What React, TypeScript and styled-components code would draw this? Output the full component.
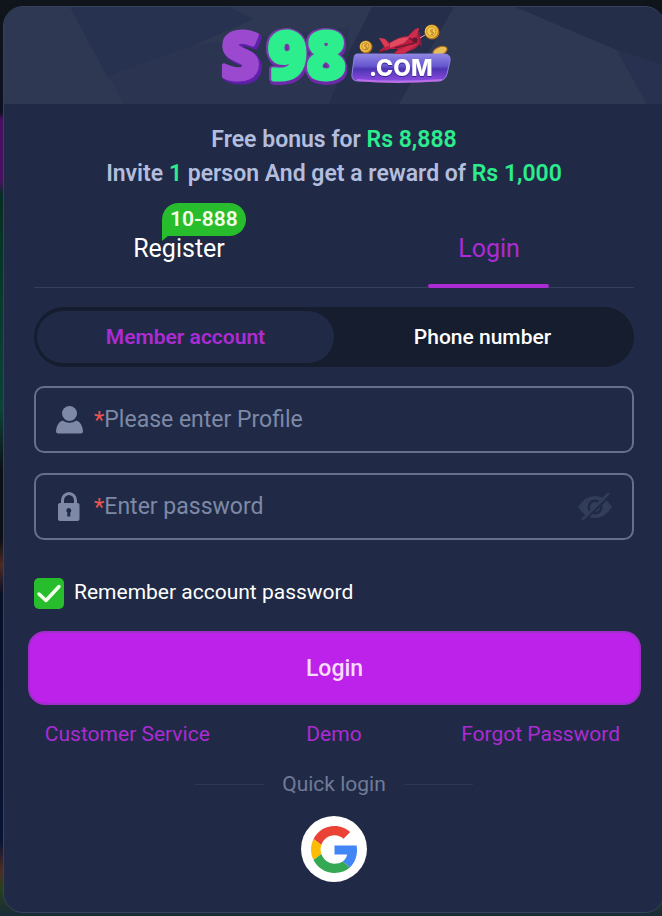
import React, { useState } from "react";
import styled, { createGlobalStyle } from "styled-components";

const colors = {
  card: "#202a46",
  banner: "#2e3853",
  dark: "#151d2f",
  line: "#343f5c",
  border: "#66708d",
  muted: "#7d89a6",
  text: "#b3bede",
  primary: "#ac2bd3",
  button: "#bd22ea",
  green: "#28bd2c",
  mint: "#2cec8d",
  error: "#ed5351",
};

const GlobalStyle = createGlobalStyle`
  * {
    box-sizing: border-box;
  }

  body {
    margin: 0;
    font-family: Roboto, "Liberation Sans", sans-serif;
    color: #fff;
    background: #0f1420;
    overflow-x: hidden;
  }

  button, input {
    font: inherit;
    color: inherit;
  }

  button {
    padding: 0;
    border: 0;
    background: none;
    cursor: pointer;
  }

  p {
    margin: 0;
  }
`;

const Page = styled.div`
  padding: 6px 0 3px 3px;
  overflow: hidden;
  background: linear-gradient(
    #10151b 0,
    #0d1020 112px,
    #4a1060 120px,
    #4a1060 180px,
    #062f24 195px,
    #0d4236 410px,
    #0b1018 470px,
    #0b1018 540px,
    #4d2a24 565px,
    #071027 595px,
    #081435 840px,
    #4b2d27 870px,
    #26401f 890px,
    #182b38 100%
  );
`;

const Card = styled.main`
  margin-right: -3px;
  border: 1px solid #36415e;
  border-radius: 20px;
  background: ${colors.card};
  overflow: hidden;
`;

const Banner = styled.header`
  display: grid;
  justify-items: center;
  height: 97px;
  background: ${colors.banner};

  > * {
    grid-area: 1 / 1;
  }
`;

const Facets = styled.svg`
  width: 100%;
  height: 97px;
`;

const LogoImage = styled.svg`
  width: 240px;
  height: 97px;
`;

const LogoLetters = styled.g`
  font-family: "Open Sans", sans-serif;
  font-weight: 800;
  font-size: 66px;
  stroke-width: 4px;
  stroke-linejoin: round;
`;

const LogoS = styled.text`
  fill: #9b49cf;
  stroke: #9b49cf;
  filter: drop-shadow(2px 1px 0 #6122aa) drop-shadow(1px 2px 0 #5c1fa6);
`;

const LogoDigits = styled.text`
  fill: #2dee8c;
  stroke: #2dee8c;
  filter: drop-shadow(1px 0 0 #7b3bab) drop-shadow(-2px 0 0 #7b3bab)
    drop-shadow(0 -1px 0 #7b3bab) drop-shadow(1px 3px 0 #6c2aa8);
`;

const LogoSuffix = styled.text`
  fill: #fff;
  font-family: Inter, sans-serif;
  font-weight: 800;
  font-size: 23px;
  filter: drop-shadow(0 1px 0 #3b258f);
`;

const Content = styled.div`
  display: flex;
  flex-direction: column;
  padding: 19px 30px 30px;
`;

const Promo = styled.p`
  text-align: center;
  font-size: 23px;
  font-weight: 600;
  line-height: 34px;
  color: ${colors.text};

  b {
    font-weight: inherit;
    color: ${colors.mint};
  }
`;

const Tabs = styled.div`
  display: grid;
  grid-template-columns: 1fr 1fr;
  gap: 20px;
  margin-top: 19px;
  border-bottom: 1px solid ${colors.line};
`;

const Tab = styled.button<{ $active: boolean }>`
  position: relative;
  z-index: 0;
  height: 77px;
  font-size: 25px;
  line-height: 30px;
  color: ${(props) => (props.$active ? colors.primary : "#fff")};

  &::after {
    content: "";
    display: ${(props) => (props.$active ? "block" : "none")};
    position: absolute;
    left: 50%;
    bottom: -1px;
    width: 121px;
    height: 4px;
    margin-left: -61px;
    border-radius: 2px;
    background: ${colors.primary};
  }
`;

const Badge = styled.span`
  position: absolute;
  z-index: -1;
  top: -7px;
  left: 128px;
  height: 33px;
  padding: 0 8px;
  border-radius: 17px 17px 17px 0;
  background: ${colors.green};
  font-size: 21px;
  font-weight: 600;
  line-height: 32px;
  color: #f3ffe9;

  &::after {
    content: "";
    position: absolute;
    left: 0;
    top: 32px;
    border-top: 6px solid ${colors.green};
    border-right: 7px solid transparent;
  }
`;

const Segment = styled.div`
  display: grid;
  grid-template-columns: 1fr 1fr;
  height: 60px;
  margin-top: 19px;
  padding: 4px 3px;
  border-radius: 30px;
  background: ${colors.dark};
`;

const SegmentButton = styled.button<{ $active: boolean }>`
  border-radius: 26px;
  font-size: 21px;
  font-weight: ${(props) => (props.$active ? 600 : 500)};
  color: ${(props) => (props.$active ? colors.primary : "#fff")};
  background: ${(props) => (props.$active ? colors.card : "transparent")};
`;

const Fields = styled.div`
  display: flex;
  flex-direction: column;
  gap: 20px;
  margin-top: 19px;
`;

const Field = styled.div`
  display: flex;
  align-items: center;
  height: 67px;
  padding: 0 20px 0 18px;
  border: 2px solid ${colors.border};
  border-radius: 10px;
  color: ${colors.muted};
`;

const FieldLabel = styled.label`
  display: flex;
  flex: 1;
  align-items: center;
  min-width: 0;
`;

const FieldIcon = styled.svg`
  flex: none;
  width: 30px;
  height: 30px;
  margin-right: 10px;
`;

const Required = styled.span`
  font-size: 24px;
  color: ${colors.error};
`;

const Input = styled.input`
  flex: 1;
  min-width: 0;
  height: 58px;
  padding: 0;
  border: 0;
  outline: 0;
  background: none;
  font-size: 23px;

  &::placeholder {
    color: ${colors.muted};
    opacity: 1;
  }
`;

const EyeButton = styled.button`
  display: flex;
  color: #323d5a;
`;

const Remember = styled.label`
  display: flex;
  align-items: flex-start;
  gap: 10px;
  margin-top: 38px;
  font-size: 21px;
  line-height: 28px;
`;

const CheckBox = styled.span`
  display: grid;
  width: 30px;
  height: 31px;

  > * {
    grid-area: 1 / 1;
  }

  input {
    appearance: none;
    width: 30px;
    height: 31px;
    margin: 0;
    border-radius: 5px;
    background: ${colors.dark};
  }

  input:checked {
    background: ${colors.green};
  }

  svg {
    pointer-events: none;
  }
`;

const Submit = styled.button`
  height: 74px;
  margin: 22px -7px 0 -6px;
  border: 2px solid #a02cc9;
  border-radius: 17px;
  background: ${colors.button};
  font-size: 23px;
  font-weight: 500;
  color: #f8dcff;
`;

const Links = styled.nav`
  display: grid;
  grid-template-columns: repeat(3, 1fr);
  margin: 14px -10px 0;
  text-align: center;
  font-size: 21px;
  line-height: 30px;

  a {
    color: ${colors.primary};
    text-decoration: none;
  }
`;

const Divider = styled.div`
  display: flex;
  align-items: center;
  justify-content: center;
  gap: 18px;
  margin-top: 20px;
  font-size: 21px;
  line-height: 30px;
  color: #707b98;

  &::before,
  &::after {
    content: "";
    width: 69px;
    height: 1px;
    background: #2c3754;
  }
`;

const GoogleButton = styled.button`
  display: grid;
  place-items: center;
  align-self: center;
  width: 66px;
  height: 66px;
  margin-top: 17px;
  border-radius: 50%;
  background: #fff;
`;

const Coin = ({ x, y, r }: { x: number; y: number; r: number }) => (
  <g transform={`translate(${x} ${y})`}>
    <circle r={r} fill="#b8741c" />
    <circle cx="-0.6" cy="-0.6" r={r - 1} fill="#f2c84c" />
    <circle cx="-0.6" cy="-0.6" r={r - 2.8} fill="none" stroke="#c58522" />
    <path d="M1-2C-2-3-2 0 0 0S2 3-1 2" fill="none" stroke="#a9651b" />
  </g>
);

const Logo = () => (
  <LogoImage viewBox="213 7 240 97" role="img" aria-label="S98.com">
    <defs>
      <linearGradient id="plate" x1="0" y1="0" x2="0" y2="1">
        <stop offset="0" stopColor="#8e86e2" />
        <stop offset="0.45" stopColor="#6656cf" />
        <stop offset="0.55" stopColor="#4c35b2" />
        <stop offset="1" stopColor="#8c4be0" />
      </linearGradient>
    </defs>
    <LogoLetters>
      <LogoS x="220" y="79">S</LogoS>
      <LogoDigits x="267" y="79">98</LogoDigits>
    </LogoLetters>
    <Coin x={365} y={47} r={6.5} />
    <Coin x={431} y={32} r={7.5} />
    <ellipse cx="439" cy="51" rx="7.5" ry="4" fill="#e8bd58" stroke="#a96d20" transform="rotate(-22 439 51)" />
    <path
      d="M356 54H443Q450 54 449 61L446 74Q444 81 437 81H357Q350 81 351 74L353 59Q353 54 356 54Z"
      fill="url(#plate)"
      stroke="#8d82df"
    />
    <path d="M356 80Q395 84 441 80" fill="none" stroke="#c06bea" strokeWidth="2" />
    <path
      d="M378 38L384 39L389 43Q396 37 407 36L414 29L418 28L417 34Q421 38 420 42L415 48L402 54H393L397 49L389 49L381 52L378 51L383 47Z"
      fill="#b91f40"
    />
    <path d="M378 38L384 39L389 46L384 47Z" fill="#dc3b55" />
    <path d="M389 43Q398 37 409 37L403 43L389 48Z" fill="#e34961" />
    <path d="M407 37L415 29L418 28L415 38ZM393 53L408 45L418 43L402 54Z" fill="#cf2c4b" />
    <path d="M394 48L414 43M408 38L416 43M384 50L378 53" stroke="#6e1730" strokeWidth="1.3" />
    <path d="M418 32L420 46" stroke="#842042" strokeWidth="2" />
    <circle cx="414" cy="40" r="2.5" fill="#581b35" />
    <path d="M419 38L424 35" stroke="#f5a0a5" />
    <LogoSuffix x="368" y="76">.COM</LogoSuffix>
  </LogoImage>
);

const App = () => {
  const [tab, setTab] = useState("login");
  const [method, setMethod] = useState("member");
  const [showPassword, setShowPassword] = useState(false);

  return (
    <Page>
      <GlobalStyle />
      <Card>
        <Banner>
          <Facets viewBox="0 0 660 97" preserveAspectRatio="none" aria-hidden="true">
            <path d="M103 69L190 38L345 20V97H119L110 78Z" fill="#2b3552" />
            <path d="M66 0L103 69L190 38L250 12L225 0Z" fill="#273150" />
            <path d="M368 0L345 45L325 97H395L450 0Z" fill="#252f4b" />
            <path d="M511 0H660V97H643L613 43Z" fill="#242e49" />
            <path d="M613 43L660 58V97H643Z" fill="#283250" />
          </Facets>
          <Logo />
        </Banner>

        <Content>
          <Promo>
            Free bonus for <b>Rs 8,888</b>
          </Promo>
          <Promo>
            Invite <b>1</b> person And get a reward of <b>Rs 1,000</b>
          </Promo>

          <Tabs role="tablist">
            <Tab role="tab" $active={tab === "register"} aria-selected={tab === "register"} onClick={() => setTab("register")}>
              Register
              <Badge>10-888</Badge>
            </Tab>
            <Tab role="tab" $active={tab === "login"} aria-selected={tab === "login"} onClick={() => setTab("login")}>
              Login
            </Tab>
          </Tabs>

          <Segment>
            <SegmentButton $active={method === "member"} onClick={() => setMethod("member")}>
              Member account
            </SegmentButton>
            <SegmentButton $active={method === "phone"} onClick={() => setMethod("phone")}>
              Phone number
            </SegmentButton>
          </Segment>

          <Fields>
            <Field>
              <FieldLabel>
                <FieldIcon viewBox="0 0 30 30" fill="currentColor" aria-hidden="true">
                  <circle cx="15.5" cy="8.5" r="7.5" />
                  <path d="M8.5 15.5Q15.5 20 22.5 15.5Q28.5 18 29 26Q29 28.5 26.5 28.5H4.5Q2 28.5 2 26Q2.5 18 8.5 15.5Z" />
                </FieldIcon>
                <Required>*</Required>
                <Input type="text" placeholder="Please enter Profile" aria-label="Profile" />
              </FieldLabel>
            </Field>

            <Field>
              <FieldLabel>
                <FieldIcon viewBox="0 0 30 30" aria-hidden="true">
                  <path d="M8.5 12V8.5a6.5 7 0 0 1 13 0V12" fill="none" stroke="currentColor" strokeWidth="3" />
                  <rect x="4" y="11" width="21.5" height="18" rx="2" fill="currentColor" />
                  <path d="M14.8 16a2.5 2.5 0 0 1 1.5 4.5v4h-3v-4A2.5 2.5 0 0 1 14.8 16Z" fill={colors.card} />
                </FieldIcon>
                <Required>*</Required>
                <Input type={showPassword ? "text" : "password"} placeholder="Enter password" aria-label="Password" />
              </FieldLabel>
              <EyeButton type="button" aria-label="Show password" onClick={() => setShowPassword(!showPassword)}>
                <svg width="34" height="30" viewBox="0 0 34 30">
                  <path d="M0 15Q7 4 17 4T34 15Q27 26 17 26T0 15Z" fill="currentColor" />
                  <circle cx="17" cy="15" r="7.5" fill={colors.card} />
                  <circle cx="17" cy="15" r="5" fill="currentColor" />
                  <path d="M6 29L32 4" stroke={colors.card} strokeWidth="2" />
                  <path d="M5 27L30 2" stroke="currentColor" strokeWidth="2.5" strokeLinecap="round" />
                </svg>
              </EyeButton>
            </Field>
          </Fields>

          <Remember>
            <CheckBox>
              <input type="checkbox" defaultChecked />
              <svg width="30" height="31" viewBox="0 0 30 31" aria-hidden="true">
                <path d="M5 16L12 22.500L25 8.500" fill="none" stroke="#f3ffe9" strokeWidth="3.5" strokeLinecap="round" strokeLinejoin="round" />
              </svg>
            </CheckBox>
            Remember account password
          </Remember>

          <Submit type="submit">Login</Submit>

          <Links>
            <a href="#service">Customer Service</a>
            <a href="#demo">Demo</a>
            <a href="#forgot">Forgot Password</a>
          </Links>

          <Divider>Quick login</Divider>

          <GoogleButton aria-label="Sign in with Google">
            <svg width="47" height="47" viewBox="0 0 48 48" aria-hidden="true">
              <path fill="#EA4335" d="M24 9.500c3.540 0 6.710 1.220 9.210 3.600l6.850-6.850C35.900 2.380 30.470 0 24 0 14.620 0 6.510 5.380 2.560 13.220l7.980 6.190C12.430 13.720 17.740 9.500 24 9.500z" />
              <path fill="#4285F4" d="M46.980 24.550c0-1.570-.15-3.090-.38-4.550H24v9.020h12.940c-.58 2.960-2.260 5.480-4.780 7.180l7.730 6c4.510-4.180 7.090-10.360 7.090-17.650z" />
              <path fill="#FBBC05" d="M10.530 28.590c-.48-1.450-.76-2.990-.76-4.590s.27-3.140.76-4.590l-7.980-6.190C.92 16.460 0 20.120 0 24c0 3.880.92 7.540 2.560 10.780l7.970-6.190z" />
              <path fill="#34A853" d="M24 48c6.480 0 11.930-2.130 15.890-5.810l-7.730-6c-2.150 1.450-4.920 2.300-8.160 2.300-6.260 0-11.570-4.220-13.470-9.910l-7.980 6.190C6.510 42.620 14.620 48 24 48z" />
            </svg>
          </GoogleButton>
        </Content>
      </Card>
    </Page>
  );
};

export default App;
